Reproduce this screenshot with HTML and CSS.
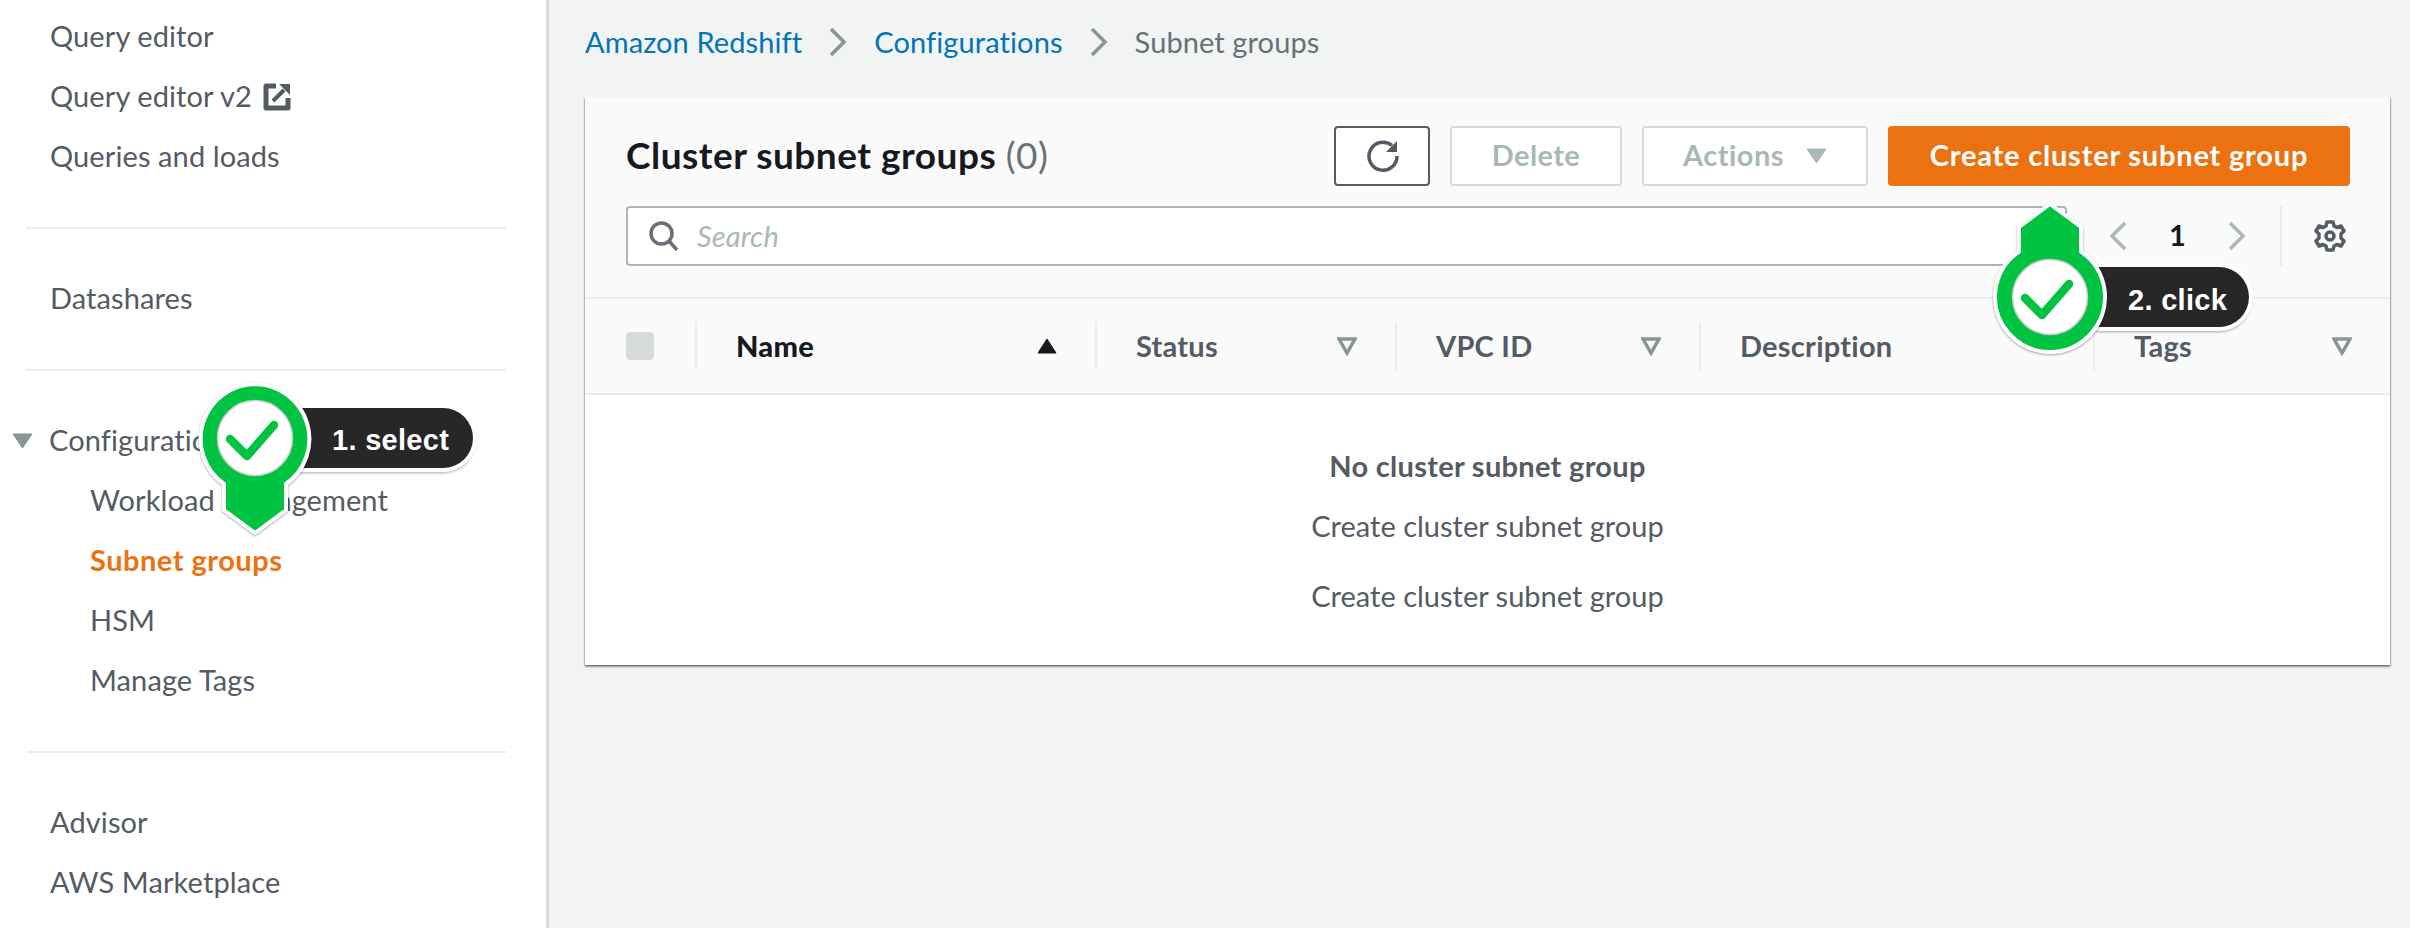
FILE: index.html
```html
<!DOCTYPE html>
<html lang="en">

<head>
    <meta charset="UTF-8">
    <meta name="viewport" content="width=device-width, initial-scale=1.0">
    <title>Subnet groups</title>
    <link rel="stylesheet" href="styles.css">
</head>

<body>
    <aside class="sidebar">
        <a href="#" class="nav-item">Query editor</a>
        <a href="#" class="nav-item">Query editor v2
            <svg class="external" viewBox="0 0 28 28" width="28" height="28">
                <path d="M13 3H3v22h22V15" fill="none" stroke="#545b64" stroke-width="5" stroke-linejoin="round" />
                <path d="M16 1h11v11z" fill="#545b64" />
                <path d="M10 18L21 7" stroke="#545b64" stroke-width="4" />
            </svg>
        </a>
        <a href="#" class="nav-item">Queries and loads</a>
        <hr class="nav-line">
        <a href="#" class="nav-item">Datashares</a>
        <hr class="nav-line">
        <a href="#" class="nav-item nav-group">
            <svg viewBox="0 0 21 16" width="21" height="16">
                <path d="M1 1h19L10.500 15z" fill="#879596" stroke="#879596" stroke-linejoin="round" />
            </svg>
            Configurations
        </a>
        <a href="#" class="nav-item nav-sub">Workload management</a>
        <a href="#" class="nav-item nav-sub selecionado">Subnet groups</a>
        <a href="#" class="nav-item nav-sub">HSM</a>
        <a href="#" class="nav-item nav-sub">Manage Tags</a>
        <hr class="nav-line">
        <a href="#" class="nav-item">Advisor</a>
        <a href="#" class="nav-item">AWS Marketplace</a>
    </aside>

    <main class="content">
        <nav class="breadcrumbs">
            <a href="#">Amazon Redshift</a>
            <svg viewBox="0 0 18 30" width="18" height="30">
                <path d="M2 2l13 13L2 28" fill="none" stroke="#879596" stroke-width="3.500" />
            </svg>
            <a href="#">Configurations</a>
            <svg viewBox="0 0 18 30" width="18" height="30">
                <path d="M2 2l13 13L2 28" fill="none" stroke="#879596" stroke-width="3.500" />
            </svg>
            <span>Subnet groups</span>
        </nav>

        <section class="card">
            <div class="card-head">
                <div class="title-row">
                    <h1>Cluster subnet groups <span>(0)</span></h1>
                    <button class="btn btn-refresh">
                        <svg viewBox="-2 0 36 36" width="36" height="36">
                            <path d="M26 7.500A14 14 0 1 0 31 18" fill="none" stroke="#545b64" stroke-width="3.500" />
                            <path d="M31 3v11H20z" fill="#545b64" />
                        </svg>
                    </button>
                    <button class="btn btn-off btn-delete">Delete</button>
                    <button class="btn btn-off btn-actions">Actions
                        <svg viewBox="0 0 21 16" width="21" height="16">
                            <path d="M1 1h19L10.500 15z" fill="#aab7b8" stroke="#aab7b8" stroke-linejoin="round" />
                        </svg>
                    </button>
                    <button class="btn btn-primary">Create cluster subnet group</button>
                </div>
                <div class="tools-row">
                    <div class="search">
                        <svg viewBox="0 0 30 30" width="30" height="30">
                            <circle cx="12.500" cy="12.500" r="10.500" fill="none" stroke="#687078" stroke-width="3.500" />
                            <path d="M20 20l8 9" stroke="#687078" stroke-width="3.500" />
                        </svg>
                        <span>Search</span>
                    </div>
                    <div class="pager">
                        <svg viewBox="0 0 20 30" width="20" height="30">
                            <path d="M17 2L4 15l13 13" fill="none" stroke="#aab7b8" stroke-width="3.500" />
                        </svg>
                        <b>1</b>
                        <svg viewBox="0 0 20 30" width="20" height="30">
                            <path d="M3 2l13 13L3 28" fill="none" stroke="#aab7b8" stroke-width="3.500" />
                        </svg>
                    </div>
                    <div class="settings">
                        <svg viewBox="0 0 32 32" width="32" height="32">
                            <circle cx="16" cy="16" r="4" fill="none" stroke="#545b64" stroke-width="3.500" />
                            <path d="M13 2h6l1 4 3 1.500 4-1.500 3 5-3 3v4l3 3-3 5-4-1.500-3 1.500-1 4h-6l-1-4-3-1.500-4 1.500-3-5 3-3v-4l-3-3 3-5 4 1.500 3-1.500z" fill="none" stroke="#545b64" stroke-width="3.500" stroke-linejoin="round" />
                        </svg>
                    </div>
                </div>
            </div>

            <div class="table-head">
                <div class="th th-check"><i class="checkbox"></i></div>
                <div class="th th-name">
                    <strong>Name</strong>
                    <svg viewBox="0 0 20 16" width="20" height="16">
                        <path d="M10 1l9 14H1z" fill="#16191f" stroke="#16191f" stroke-linejoin="round" />
                    </svg>
                </div>
                <div class="th th-status">Status
                    <svg class="sort" viewBox="0 0 20 20" width="20" height="20">
                        <path d="M2 3h16l-8 14z" fill="none" stroke="#879596" stroke-width="3.500" />
                    </svg>
                </div>
                <div class="th th-vpc">VPC ID
                    <svg class="sort" viewBox="0 0 20 20" width="20" height="20">
                        <path d="M2 3h16l-8 14z" fill="none" stroke="#879596" stroke-width="3.500" />
                    </svg>
                </div>
                <div class="th th-desc">Description</div>
                <div class="th th-tags">Tags
                    <svg class="sort" viewBox="0 0 20 20" width="20" height="20">
                        <path d="M2 3h16l-8 14z" fill="none" stroke="#879596" stroke-width="3.500" />
                    </svg>
                </div>
            </div>

            <div class="empty">
                <p class="empty-title">No cluster subnet group</p>
                <p>Create cluster subnet group</p>
                <p class="empty-last">Create cluster subnet group</p>
            </div>
        </section>
    </main>

    <!-- pasos encima de la pagina -->
    <div class="step-label step-1">1. select</div>
    <svg class="pin pin-1" viewBox="0 0 120 160" width="120" height="160">
        <path d="M60 3A55 55 0 0 1 91 103V129L60 152L29 129V103A55 55 0 0 1 60 3z" fill="#00c441" stroke="#fff" stroke-width="4" stroke-linejoin="round" />
        <circle cx="60" cy="57" r="37.500" fill="#fff" stroke="#ccc" stroke-width="1.500" />
        <path d="M35 58l17 17 27-31" fill="none" stroke="#00c441" stroke-width="8.500" stroke-linecap="round" stroke-linejoin="round" />
    </svg>

    <div class="step-label step-2">2. click</div>
    <svg class="pin pin-2" viewBox="0 0 120 160" width="120" height="160">
        <path d="M60 3L91 26V50.600A55 55 0 1 1 29 50.600V26z" fill="#00c441" stroke="#fff" stroke-width="4" stroke-linejoin="round" />
        <circle cx="60" cy="96" r="37.500" fill="#fff" stroke="#ccc" stroke-width="1.500" />
        <path d="M35 97l17 17 27-31" fill="none" stroke="#00c441" stroke-width="8.500" stroke-linecap="round" stroke-linejoin="round" />
    </svg>
</body>

</html>
```

FILE: styles.css
```css
* {
    box-sizing: border-box;
}

body {
    margin: 0;
    height: 928px;
    overflow: hidden;
    display: flex;
    background-color: #f2f3f3;
    color: #545b64;
    font-family: "Lato", "Noto Sans", sans-serif;
    font-size: 29px;
    letter-spacing: .1px;
}

a {
    text-decoration: none;
}

/* sidebar */
.sidebar {
    width: 549px;
    height: 100%;
    padding-top: 7px;
    background-color: #fff;
    border-right: 3px solid #d5dbdb;
    flex-shrink: 0;
}

.nav-item {
    height: 60px;
    padding-left: 50px;
    padding-bottom: 3px;
    display: flex;
    align-items: center;
    color: #545b64;
}

.nav-item svg {
    margin-top: 3px;
}

.external {
    margin-left: 11px;
}

.nav-line {
    height: 2px;
    margin: 40px 40px 40px 26px;
    border: 0;
    background-color: #eaeded;
}

.nav-group {
    padding-left: 12px;
    gap: 16px;
}

.nav-sub {
    padding-left: 90px;
}

.nav-sub.selecionado {
    color: #ec7211;
    font-weight: 700;
    letter-spacing: .5px;
}

/* contenido */
.content {
    flex: 1;
    padding: 0 20px 0 36px;
}

.breadcrumbs {
    height: 97px;
    padding-bottom: 15px;
    display: flex;
    align-items: center;
    gap: 27px;
}

.breadcrumbs a {
    color: #0073bb;
}

.breadcrumbs span {
    color: #687078;
}

.breadcrumbs svg {
    margin-top: 2px;
}

.card {
    height: 568px;
    background-color: #fff;
    box-shadow: 0 2px 2px rgba(0, 28, 36, .4), 1px 1px 1px rgba(0, 28, 36, .2), -1px 1px 1px rgba(0, 28, 36, .15);
}

.card-head {
    height: 200px;
    padding: 29px 40px 0 41px;
    background-color: #fafafa;
}

.title-row,
.tools-row {
    height: 60px;
    display: flex;
    align-items: center;
}

.title-row {
    gap: 20px;
}

.tools-row {
    margin-top: 20px;
}

h1 {
    margin: 0 auto 3px 0;
    font-size: 37px;
    font-weight: 700;
    letter-spacing: .5px;
    color: #16191f;
}

h1 span {
    font-weight: 400;
    color: #687078;
}

.btn {
    height: 60px;
    padding: 0 0 3px;
    border-radius: 4px;
    border: 2px solid #545b64;
    background-color: #fff;
    display: flex;
    align-items: center;
    justify-content: center;
    font-family: inherit;
    font-size: 29px;
    font-weight: 700;
    letter-spacing: .5px;
}

.btn svg {
    margin-top: 3px;
}

.btn-refresh {
    width: 96px;
}

.btn-off {
    border-color: #d5dbdb;
    color: #aab7b8;
}

.btn-delete {
    width: 172px;
    letter-spacing: .4px;
}

.btn-actions {
    width: 226px;
    gap: 22px;
}

.btn-primary {
    width: 462px;
    border-color: #ec7211;
    background-color: #ec7211;
    color: #fff;
    letter-spacing: .8px;
}

.search {
    flex: 1;
    height: 60px;
    padding-left: 21px;
    border: 2px solid #aab7b8;
    border-radius: 4px;
    background-color: #fff;
    display: flex;
    align-items: center;
    gap: 18px;
    color: #aab7b8;
    font-style: italic;
}

.search span {
    margin-bottom: 1px;
}

.pager {
    width: 213px;
    padding: 0 33px 0 41px;
    display: flex;
    align-items: center;
    justify-content: space-between;
    color: #16191f;
}

.pager b {
    margin-bottom: 3px;
}

.settings {
    width: 70px;
    height: 60px;
    padding-left: 32px;
    border-left: 2px solid #eaeded;
    display: flex;
    align-items: center;
}

/* tabla */
.table-head {
    height: 98px;
    display: flex;
    align-items: center;
    background-color: #fafafa;
    border-top: 2px solid #eaeded;
    border-bottom: 2px solid #eaeded;
    font-weight: 700;
    letter-spacing: .25px;
}

.th {
    height: 48px;
    padding: 0 38px 1px 39px;
    border-left: 2px solid #eaeded;
    display: flex;
    align-items: center;
    justify-content: space-between;
}

.th svg {
    margin-top: 1px;
}

.th-check {
    width: 110px;
    padding: 0 0 0 41px;
    border-left: 0;
    justify-content: flex-start;
}

.checkbox {
    width: 28px;
    height: 28px;
    border-radius: 4px;
    background-color: #d5dbdb;
}

.th-name {
    width: 400px;
    color: #16191f;
}

.th-status {
    width: 300px;
}

.th-vpc {
    width: 304px;
}

.th-desc {
    width: 394px;
}

.th-tags {
    flex: 1;
}

.empty {
    padding-top: 53px;
    text-align: center;
    letter-spacing: 0;
}

.empty p {
    margin: 0;
    height: 36px;
    line-height: 36px;
    margin-top: 24px;
}

.empty .empty-title {
    margin-top: 0;
    font-weight: 700;
    letter-spacing: .3px;
}

.empty .empty-last {
    margin-top: 34px;
}

/* pasos */
.pin {
    position: absolute;
    filter: drop-shadow(0 1px 1px rgba(0, 0, 0, .35));
}

.pin-1 {
    left: 195px;
    top: 381px;
}

.pin-2 {
    left: 1990px;
    top: 201px;
}

.step-label {
    position: absolute;
    height: 60px;
    border-radius: 30px;
    background-color: #272727;
    box-shadow: 0 0 0 4px #fff, 0 3px 3px 2px rgba(0, 0, 0, .35);
    color: #fff;
    font-family: "Liberation Sans", Arial, sans-serif;
    font-size: 29px;
    font-weight: 700;
    letter-spacing: .3px;
    line-height: 64px;
}

.step-1 {
    left: 270px;
    top: 408px;
    width: 203px;
    padding-left: 62px;
}

.step-2 {
    left: 2070px;
    top: 267px;
    width: 179px;
    padding-left: 58px;
    line-height: 67px;
}
```
